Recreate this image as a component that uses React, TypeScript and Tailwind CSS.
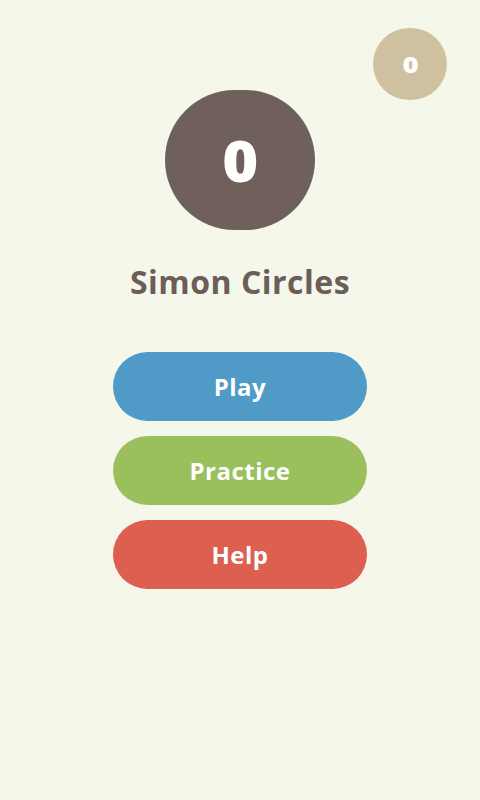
import React from "react";

const buttons = [
  { label: "Play", color: "bg-[#4f9ac6]" },
  { label: "Practice", color: "bg-[#99c05d]" },
  { label: "Help", color: "bg-[#dc5f50]" },
];

export default function App() {
  return (
    <div
      className="relative w-[480px] h-[800px] bg-[#f5f7eb] flex flex-col items-center"
      style={{ fontFamily: "'Open Sans', Lato, sans-serif" }}
    >
      {/* best score badge */}
      <div className="absolute left-[373px] top-[28px] w-[74px] h-[72px] rounded-full bg-[#cfc1a0] flex items-center justify-center text-white font-extrabold text-[22px]">
        <span className="inline-block scale-x-125">0</span>
      </div>

      {/* current score */}
      <div className="mt-[90px] w-[150px] h-[140px] rounded-full bg-[#6f605b] flex items-center justify-center text-white font-extrabold text-[56px] leading-none">
        <span className="inline-block scale-x-110">0</span>
      </div>

      <h1 className="mt-[32px] text-[32px] font-bold tracking-[0.5px] text-[#6b5d58] leading-[40px]">Simon Circles</h1>

      <div className="mt-[50px] flex flex-col gap-[15px]">
        {buttons.map((b) => (
          <button
            key={b.label}
            className={`w-[254px] h-[69px] rounded-full ${b.color} text-white font-bold text-[24px] tracking-[0.5px]`}
          >
            {b.label}
          </button>
        ))}
      </div>
    </div>
  );
}
